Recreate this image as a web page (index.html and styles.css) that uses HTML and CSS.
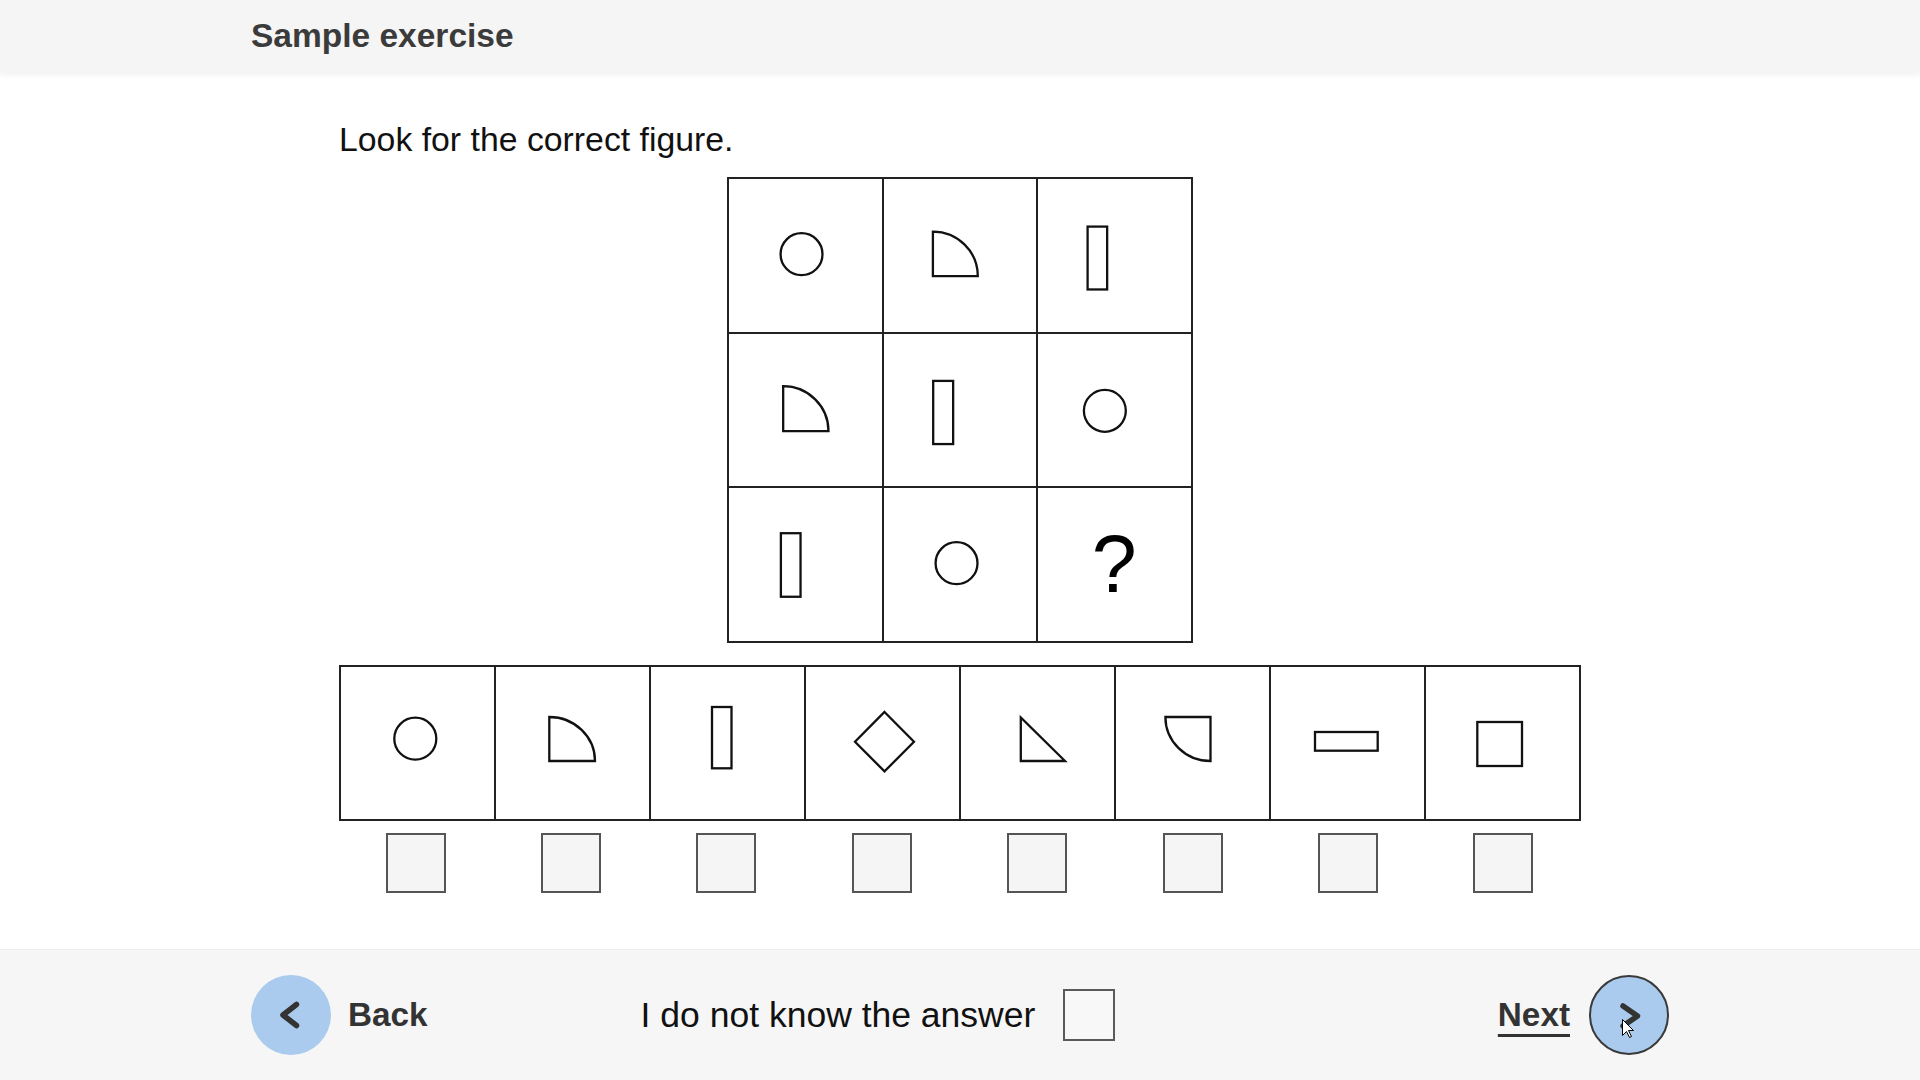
FILE: index.html
```html
<!DOCTYPE html>
<html lang="en">
<head>
    <meta charset="UTF-8">
    <title>Sample exercise</title>
<link rel="stylesheet" href="styles.css">
</head>
<body>
<div class="top-bar">
    <div class="top-inner">
        <h1 class="top-title">Sample exercise</h1>
    </div>
</div>

<div class="content">
    <p class="task">Look for the correct figure.</p>

    <!-- 3x3 matrix -->
    <div class="matrix">
        <div class="cell"><svg viewBox="0 0 153 153"><circle cx="72.7" cy="75.3" r="21"/></svg></div>
        <div class="cell"><svg viewBox="0 0 153 153"><path d="M49 52.7 L49 97.3 L94 97.3 A45 44.6 0 0 0 49 52.7 Z"/></svg></div>
        <div class="cell"><svg viewBox="0 0 153 153"><rect x="49.7" y="47.7" width="19.6" height="63"/></svg></div>

        <div class="cell"><svg viewBox="0 0 153 153"><path d="M54.3 52.3 L54.3 97.3 L99.7 97.3 A45.4 45 0 0 0 54.3 52.3 Z"/></svg></div>
        <div class="cell"><svg viewBox="0 0 153 153"><rect x="49.3" y="47" width="20" height="63.3"/></svg></div>
        <div class="cell"><svg viewBox="0 0 153 153"><circle cx="67" cy="77" r="21"/></svg></div>

        <div class="cell"><svg viewBox="0 0 153 153"><rect x="52" y="45.3" width="19.7" height="63.7"/></svg></div>
        <div class="cell"><svg viewBox="0 0 153 153"><circle cx="72.7" cy="75.3" r="21"/></svg></div>
        <div class="cell"><svg viewBox="0 0 153 153"><text class="qmark" x="76.5" y="104" text-anchor="middle">?</text></svg></div>
    </div>

    <!-- answer choices -->
    <div class="choices">
        <div class="figs">
            <div class="fig"><svg viewBox="0 0 153 152"><circle cx="74.3" cy="71.7" r="21"/></svg></div>
            <div class="fig"><svg viewBox="0 0 153 152"><path d="M53.3 50 L53.3 94 L99 94 A45.7 44 0 0 0 53.3 50 Z"/></svg></div>
            <div class="fig"><svg viewBox="0 0 153 152"><rect x="61" y="40" width="19.5" height="61.3"/></svg></div>
            <div class="fig"><svg viewBox="0 0 153 152"><path d="M78.5 45 L108 74.7 L78.5 104.4 L49 74.7 Z"/></svg></div>
            <div class="fig"><svg viewBox="0 0 153 152"><path d="M59.8 50.5 L59.8 94 L104 94 Z"/></svg></div>
            <div class="fig"><svg viewBox="0 0 153 152"><path d="M49.4 50 L94.5 50 L94.5 94 A45.1 44 0 0 1 49.4 50 Z"/></svg></div>
            <div class="fig"><svg viewBox="0 0 153 152"><rect x="44" y="65" width="62.7" height="18.7"/></svg></div>
            <div class="fig"><svg viewBox="0 0 153 152"><rect x="51.3" y="55" width="44.7" height="44"/></svg></div>
        </div>
        <div class="ticks">
            <div class="tick"></div>
            <div class="tick"></div>
            <div class="tick"></div>
            <div class="tick"></div>
            <div class="tick"></div>
            <div class="tick"></div>
            <div class="tick"></div>
            <div class="tick"></div>
        </div>
    </div>
</div>

<div class="bottom-bar">
    <div class="bottom-inner">
        <a class="nav-back">
            <span class="round">
                <svg viewBox="0 0 80 80"><path class="chev" d="M45.5 29.5 L32 40 L45.5 50.5"/></svg>
            </span>
            <span>Back</span>
        </a>
        <div class="dont-know">
            <span>I do not know the answer</span>
            <span class="dk-box"></span>
        </div>
        <a class="nav-next">
            <span class="next-label">Next</span>
            <span class="round round-next">
                <svg viewBox="0 0 76 76"><path class="chev" d="M32 29 L46.5 39 L32 49"/></svg>
                <svg class="cursor" viewBox="0 0 12 19"><path d="M0.5 0.5 L0.5 16.5 L4.5 12.5 L7.5 18.5 L9.5 17.5 L6.5 11.5 L11.5 11.5 Z"/></svg>
            </span>
        </a>
    </div>
</div>
</body>
</html>
```

FILE: styles.css
```css
*{
    box-sizing: border-box;
}
body{
    margin: 0;
    height: 1080px;
    display: flex;
    flex-direction: column;
    background-color: #ffffff;
    color: #111111;
    font-family: "Liberation Sans", Arial, sans-serif;
}

/* header */
.top-bar{
    height: 73px;
    background-color: #f5f5f5;
    box-shadow: 0 2px 6px rgba(0, 0, 0, 0.06);
    position: relative;
    z-index: 1;
}
.top-inner{
    width: 1418px;
    margin: 0 auto;
    padding-top: 17px;
}
.top-title{
    margin: 0;
    font-size: 33.5px;
    line-height: 38px;
    font-weight: bold;
    color: #3b3b3b;
}

/* exercise */
.content{
    flex: 1;
    width: 1242px;
    margin: 0 auto;
    padding-top: 47px;
}
.task{
    margin: 0;
    font-size: 33.8px;
    line-height: 38px;
}
.matrix{
    width: 466px;
    height: 466px;
    margin: 19px auto 0;
    display: grid;
    grid-template-columns: repeat(3, 1fr);
    grid-template-rows: repeat(3, 1fr);
    border-left: 2px solid #222222;
    border-top: 2px solid #222222;
}
.cell{
    border-right: 2px solid #222222;
    border-bottom: 2px solid #222222;
}
.cell svg,
.fig svg{
    display: block;
    width: 100%;
    height: 100%;
    fill: none;
    stroke: #111111;
    stroke-width: 2.3;
}
.qmark{
    fill: #000000;
    stroke: none;
    font-family: "Liberation Sans", Arial, sans-serif;
    font-size: 81px;
}
.choices{
    margin-top: 22px;
}
.figs{
    display: flex;
    height: 156px;
    border: 2px solid #222222;
    border-right: 0;
}
.fig{
    width: 155px;
    border-right: 2px solid #222222;
}
.ticks{
    display: grid;
    grid-template-columns: repeat(8, 155.4px);
    margin-left: -1px;
    margin-top: 12px;
}
.tick{
    justify-self: center;
    width: 60px;
    height: 60px;
    border: 2px solid #555555;
    background-color: #f5f5f5;
}

/* footer */
.bottom-bar{
    height: 131px;
    background-color: #f6f6f6;
    border-top: 1px solid #eeeeee;
}
.bottom-inner{
    width: 1418px;
    height: 100%;
    margin: 0 auto;
    display: flex;
    align-items: center;
}
.nav-back,
.nav-next{
    display: flex;
    align-items: center;
    font-size: 33.3px;
    font-weight: bold;
    color: #333333;
    cursor: pointer;
}
.nav-back{
    gap: 17px;
}
.nav-next{
    gap: 19px;
    margin-left: auto;
}
.next-label{
    text-decoration: underline;
    text-decoration-thickness: 3px;
    text-underline-offset: 8px;
}
.round{
    position: relative;
    width: 80px;
    height: 80px;
    border-radius: 50%;
    background-color: #aacbee;
}
.round svg{
    display: block;
    width: 100%;
    height: 100%;
}
.round-next{
    border: 2px solid #3a3a3a;
}
.chev{
    fill: none;
    stroke: #333333;
    stroke-width: 5.5;
    stroke-linecap: round;
    stroke-linejoin: round;
}
.round .cursor{
    position: absolute;
    left: 31px;
    top: 42px;
    width: 12px;
    height: 19px;
    fill: #ffffff;
    stroke: #000000;
    stroke-width: 1;
}
.dont-know{
    margin-left: 213px;
    display: flex;
    align-items: center;
    gap: 28px;
    font-size: 35.5px;
    color: #111111;
}
.dk-box{
    width: 52px;
    height: 52px;
    border: 2px solid #5a5a5a;
    background-color: #f8f8f8;
}
```
